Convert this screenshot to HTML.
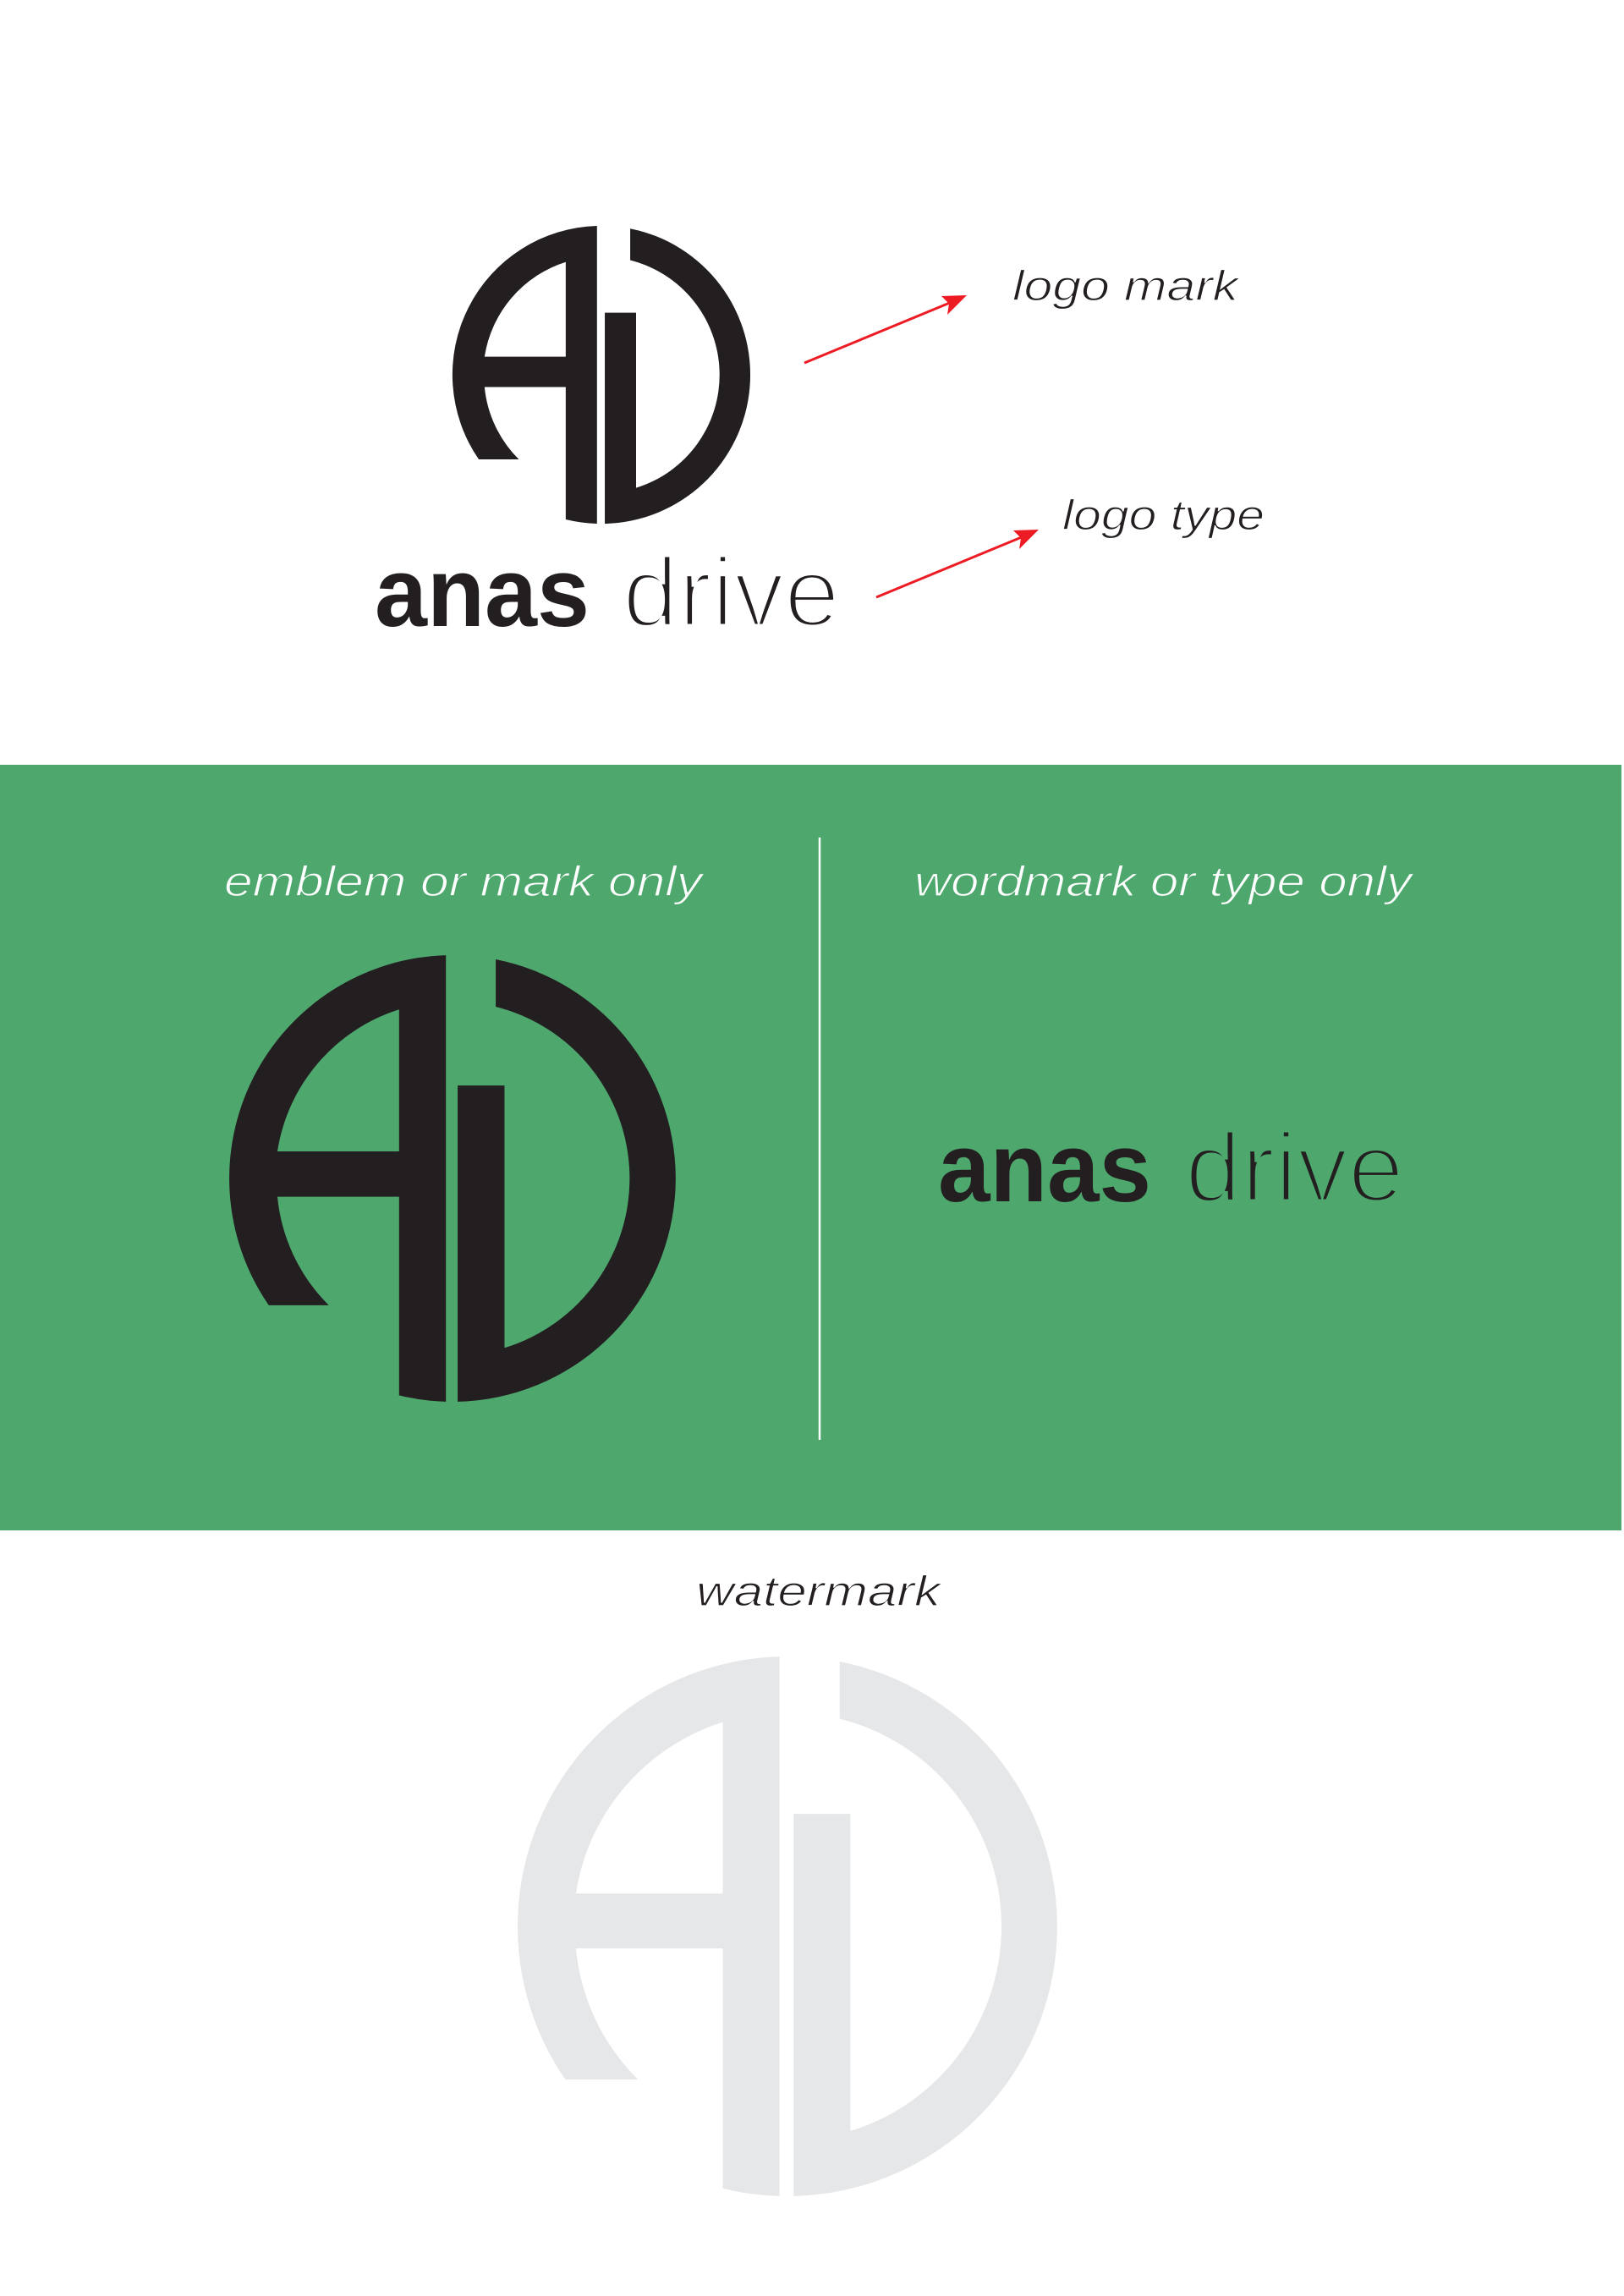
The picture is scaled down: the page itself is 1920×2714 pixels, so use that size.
<!DOCTYPE html>
<html><head><meta charset="utf-8"><style>
html,body{margin:0;padding:0;background:#fff;}
svg{display:block;}
</style></head><body>
<svg width="1920" height="2714" viewBox="0 0 1920 2714" xmlns="http://www.w3.org/2000/svg">
<defs>
<g id="mark">
<path fill-rule="evenodd" d="M -4.5,-152.43 A152.5 152.5 0 0 0 -125.5,86.6 L -84.5,86.6 A121 121 0 0 1 -119.6,12.5 L -36.5,12.5 L -36.5,148.1 A152.5 152.5 0 0 0 -4.5,152.43 Z M -119.6,-18.5 A121 121 0 0 1 -36.5,-115.4 L -36.5,-18.5 Z"/>
<path d="M 29.5,-149.6 A152.5 152.5 0 0 1 3.5,152.46 L 3.5,-63.5 L 35.5,-63.5 L 35.5,115.7 A121 121 0 0 0 29.5,-117.3 Z"/>
</g>
</defs>
<rect width="1920" height="2714" fill="#fff"/>
<g fill="#231f20" transform="translate(711,443) scale(1.155)"><use href="#mark"/></g>
<g font-family="Liberation Sans, sans-serif" fill="#231f20">
<text x="443" y="740" font-size="116" font-weight="bold" textLength="254" lengthAdjust="spacingAndGlyphs">anas</text>
<text x="736" y="740" font-size="116" textLength="257" lengthAdjust="spacingAndGlyphs" stroke="#fff" stroke-width="5">drive</text>
</g>
<g font-family="Liberation Sans, sans-serif" font-style="italic" font-size="50" fill="#231f20" stroke="#fff" stroke-width="1.2">
<text x="1197" y="355" textLength="267" lengthAdjust="spacingAndGlyphs">logo mark</text>
<text x="1256" y="626" textLength="239" lengthAdjust="spacingAndGlyphs">logo type</text>
</g>
<g stroke="#ed1c24" stroke-width="3" fill="#ed1c24">
<line x1="951" y1="429" x2="1130" y2="355"/>
<path d="M1143,349 L1113,350 L1122,359 L1120,372 Z" stroke="none"/>
<line x1="1036" y1="706" x2="1215" y2="632"/>
<path d="M1228,626 L1198,627 L1207,636 L1205,649 Z" stroke="none"/>
</g>
<rect x="0" y="904" width="1917" height="905" fill="#4ea86e"/>
<line x1="969" y1="990" x2="969" y2="1702" stroke="#fff" stroke-width="2.5"/>
<g font-family="Liberation Sans, sans-serif" font-style="italic" font-size="50" fill="#fff" stroke="#4ea86e" stroke-width="1.2">
<text x="265" y="1059" textLength="565" lengthAdjust="spacingAndGlyphs">emblem or mark only</text>
<text x="1081" y="1059" textLength="588" lengthAdjust="spacingAndGlyphs">wordmark or type only</text>
</g>
<g fill="#231f20" transform="translate(535,1393) scale(1.731)"><use href="#mark"/></g>
<g font-family="Liberation Sans, sans-serif" fill="#231f20">
<text x="1109" y="1420" font-size="116" font-weight="bold" textLength="252" lengthAdjust="spacingAndGlyphs">anas</text>
<text x="1401" y="1420" font-size="116" textLength="259" lengthAdjust="spacingAndGlyphs" stroke="#4ea86e" stroke-width="5">drive</text>
</g>
<text x="823" y="1898" font-family="Liberation Sans, sans-serif" font-style="italic" font-size="50" fill="#231f20" stroke="#fff" stroke-width="1.2" textLength="289" lengthAdjust="spacingAndGlyphs">watermark</text>
<g fill="#e6e7e8" transform="translate(931,2277) scale(2.092)"><use href="#mark"/></g>
</svg>
</body></html>
